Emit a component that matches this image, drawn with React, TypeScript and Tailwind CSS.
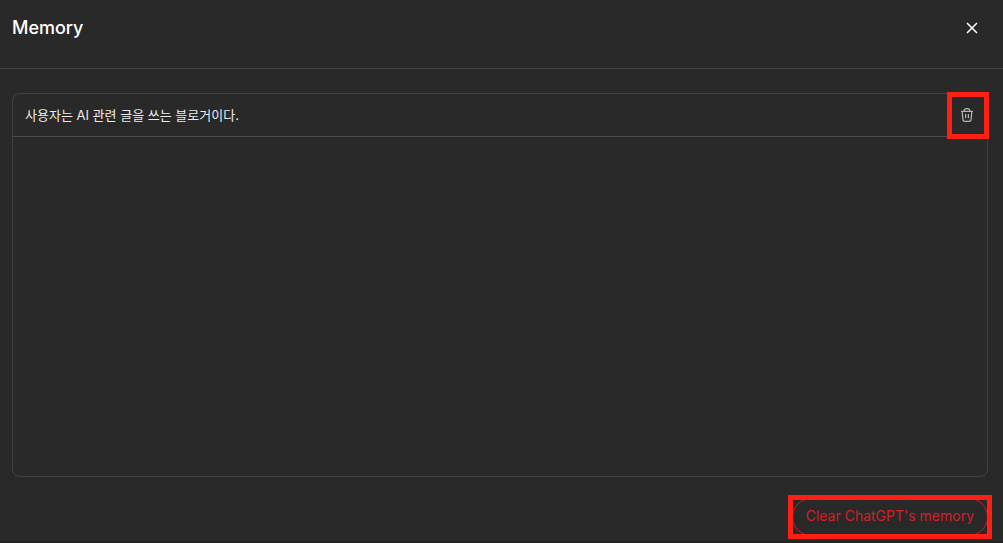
import { useState } from "react"

type MemoryItem = { id: number; text: string }

const initialMemories: MemoryItem[] = [
  { id: 1, text: "사용자는 AI 관련 글을 쓰는 블로거이다." },
]

function CloseIcon() {
  return (
    <svg width="12" height="12" viewBox="0 0 12 12" fill="none" stroke="currentColor" strokeWidth="1.5" aria-hidden="true">
      <path d="M1 1L11 11M11 1L1 11" />
    </svg>
  )
}

function TrashIcon() {
  return (
    <svg width="14" height="16" viewBox="0 0 14 16" fill="none" stroke="currentColor" strokeWidth="1.2" aria-hidden="true">
      <path d="M1 4.4H13" />
      <path d="M4.2 4.2V3.8C4.2 2.4 5.4 1.6 7 1.6S9.8 2.4 9.8 3.8V4.2" />
      <path d="M2.2 4.4L2.9 12.6C3 13.7 3.6 14.3 4.7 14.3H9.3C10.4 14.3 11 13.7 11.1 12.6L11.8 4.4" />
      <path d="M5.6 7V11.2M8.4 7V11.2" />
    </svg>
  )
}

export default function App() {
  const [memories, setMemories] = useState(initialMemories)

  const removeMemory = (id: number) => {
    setMemories((items) => items.filter((item) => item.id !== id))
  }

  return (
    <main className="flex min-h-screen flex-col border-b-2 border-[#242222] bg-[#292929] font-['Inter','Noto_Sans_CJK_KR',sans-serif] text-white">
      <header className="flex items-start justify-between border-b border-[#424242] px-3 pt-3.5 pb-6.5 pr-[17px]">
        <h1 className="text-lg leading-7 font-medium">Memory</h1>
        <button type="button" aria-label="Close" className="flex size-7 items-center justify-center">
          <CloseIcon />
        </button>
      </header>

      <section className="flex flex-1 flex-col px-3 pt-6 pr-[15px] pb-[5px]">
        <div className="min-h-80 flex-1 rounded-lg border border-[#424242]">
          <table className="w-full text-left">
            <tbody>
              {memories.map((item) => (
                <tr key={item.id} className="border-b border-[#4d4d4d]">
                  <td className="px-3 py-2.5 text-[13px] leading-5.5 text-[#ececec]">{item.text}</td>
                  <td className="w-10 p-0">
                    <button
                      type="button"
                      aria-label="Delete memory"
                      onClick={() => removeMemory(item.id)}
                      className="relative flex h-[42px] w-10 items-center justify-center text-[#b4b4b4]"
                    >
                      <TrashIcon />
                      <span className="pointer-events-none absolute -top-0.5 -right-0.5 -bottom-[3px] left-0 border-5 border-[#ff1f14]" />
                    </button>
                  </td>
                </tr>
              ))}
            </tbody>
          </table>
        </div>

        <div className="mt-[21px] flex justify-end">
          <button
            type="button"
            onClick={() => setMemories([])}
            className="relative h-[38px] rounded-full border border-[#c4222a] px-[13px] pb-0.5 text-sm text-[#cf222a]"
          >
            Clear ChatGPT's memory
            <span className="pointer-events-none absolute -inset-x-[5px] -inset-y-1 border-5 border-[#ff1f14]" />
          </button>
        </div>
      </section>
    </main>
  )
}
